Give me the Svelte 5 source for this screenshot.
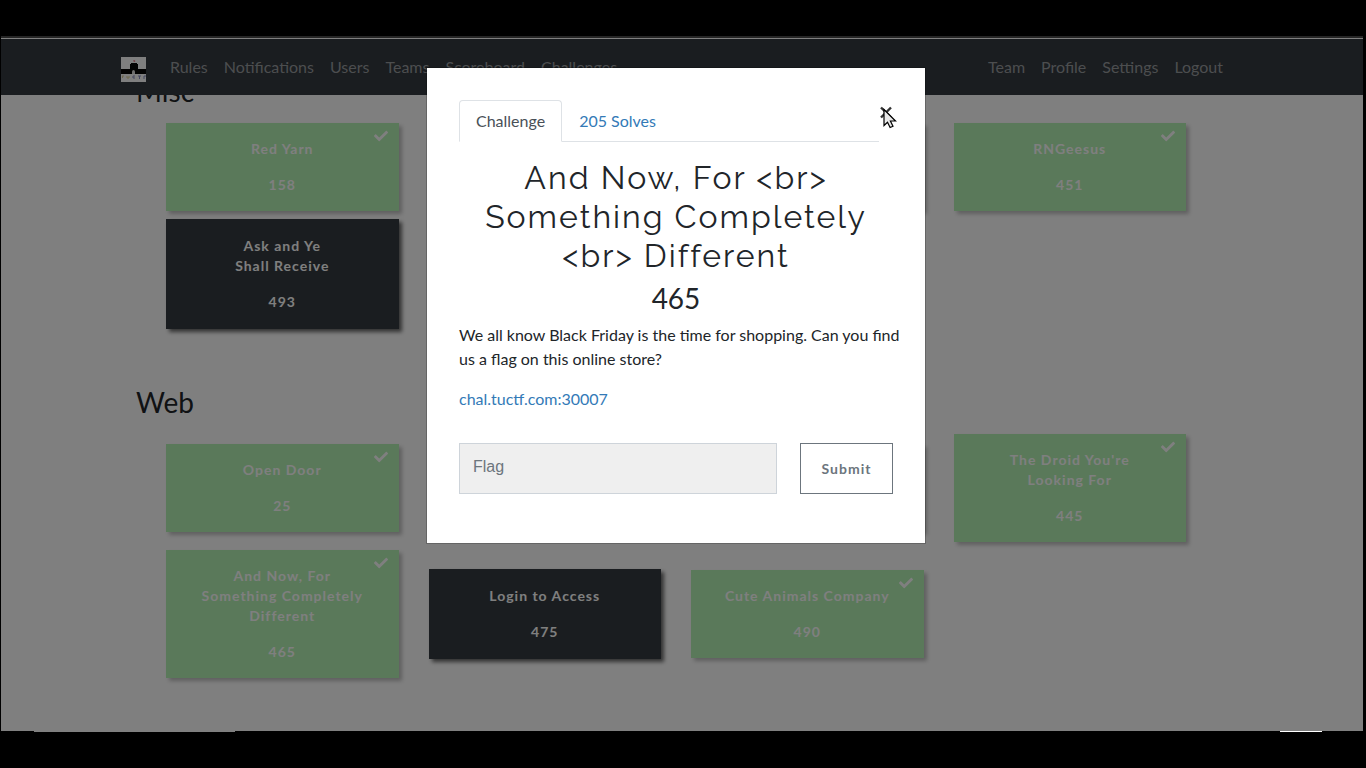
<script>
  const leftLinks = ['Rules', 'Notifications', 'Users', 'Teams', 'Scoreboard', 'Challenges'];
  const rightLinks = ['Team', 'Profile', 'Settings', 'Logout'];
  const sections = [
    {
      name: 'Misc',
      cards: [
        { lines: ['Red Yarn'], points: 158, solved: true },
        { covered: true },
        { covered: true },
        { lines: ['RNGeesus'], points: 451, solved: true },
        { lines: ['Ask and Ye', 'Shall Receive'], points: 493 }
      ]
    },
    {
      name: 'Web',
      cards: [
        { lines: ['Open Door'], points: 25, solved: true },
        { covered: true },
        { covered: true },
        { lines: ["The Droid You're", 'Looking For'], points: 445, solved: true },
        { lines: ['And Now, For', 'Something Completely', 'Different'], points: 465, solved: true },
        { lines: ['Login to Access'], points: 475 },
        { lines: ['Cute Animals Company'], points: 490, solved: true }
      ]
    }
  ];
  let flag = $state('');
</script>

<div class="window">
  <div class="chrome"></div>
  <div class="page">
    <nav>
      <div class="container bar">
        <a class="brand" href="#home" aria-label="Home">
          <svg width="25" height="25" viewBox="0 0 25 25">
            <rect width="25" height="25" fill="#fff" />
            <path d="M0 12h9V7h1V6h6v1h1v5h8v5H0z" fill="#060606" />
            <path d="M11 17v-2q0-2 1.500-2t1.500 2v2z" fill="#ddd" />
            <path d="M12 4l1-1 1.500 1-1 1z" fill="#e06c78" />
            <path d="M1 19h2M1.500 19v2M6 19v2h2v-2" stroke="#dccf98" fill="none" />
            <path d="M14 19h-2v2h2M17 19h3M18.500 19v3M25 19h-2v3" stroke="#8a8fc0" fill="none" />
          </svg>
        </a>
        <div class="links">
          {#each leftLinks as l}<a href="#{l}">{l}</a>{/each}
        </div>
        <div class="links end">
          {#each rightLinks as l}<a href="#{l}">{l}</a>{/each}
        </div>
      </div>
    </nav>
    <main class="container">
      {#each sections as s}
        <section>
          <h3>{s.name}</h3>
          <div class="cards">
            {#each s.cards as c}
              {#if c.covered}
                <div class="card solved"></div>
              {:else}
                <button class="card" class:solved={c.solved}>
                  {#if c.solved}
                    <svg class="check" width="14" height="14" viewBox="0 0 512 512" fill="currentColor">
                      <path d="M173.898 439.404l-166.400-166.400c-9.997-9.997-9.997-26.206 0-36.204l36.203-36.204c9.997-9.998 26.207-9.998 36.204 0L192 312.690 432.095 72.596c9.997-9.997 26.207-9.997 36.204 0l36.203 36.204c9.997 9.997 9.997 26.206 0 36.204l-294.400 294.401c-9.998 9.997-26.207 9.997-36.204-.001z" />
                    </svg>
                  {/if}
                  <span class="name">{#each c.lines as line}<span>{line}</span>{/each}</span>
                  <span>{c.points}</span>
                </button>
              {/if}
            {/each}
          </div>
        </section>
      {/each}
    </main>
  </div>
  <div class="backdrop"></div>
  <div class="modal" role="dialog" aria-labelledby="title">
    <div class="head">
      <div class="tabs" role="tablist">
        <button role="tab" aria-selected="true" class="tab active">Challenge</button>
        <button role="tab" aria-selected="false" class="tab">205 Solves</button>
      </div>
      <button class="close" aria-label="Close">
        <svg width="14" height="24" viewBox="0 0 14 24">
          <path d="M2 7.500l10 10M12 7.500l-10 10" stroke="#333" stroke-width="2.400" />
        </svg>
        <svg class="pointer" width="14" height="21" viewBox="0 0 14 21">
          <path d="M1 1.500V17.500l3.500-3.300 2.600 5.300 2.900-1.300-2.600-5.200H12.500z" fill="#e9e9e9" stroke="#000" stroke-width="1.200" />
        </svg>
      </button>
    </div>
    <h2 id="title">And Now, For &lt;br&gt;<br />Something Completely<br />&lt;br&gt; Different</h2>
    <h3 class="points">465</h3>
    <p>We all know Black Friday is the time for shopping. Can you find<br />us a flag on this online store?</p>
    <p><a href="#chal">chal.tuctf.com:30007</a></p>
    <form onsubmit={(e) => e.preventDefault()}>
      <input type="text" aria-label="Flag" placeholder="Flag" bind:value={flag} />
      <button class="submit">Submit</button>
    </form>
  </div>
</div>
<div class="dock"><div class="task"></div><div class="tray"></div></div>

<style>
  :global(body) {
    margin: 0;
    background: #000;
    font-family: Lato, sans-serif;
    font-size: 16px;
    line-height: 24px;
    color: #212529;
  }
  * { box-sizing: border-box; }
  button { font-family: inherit; cursor: pointer; }
  a { text-decoration: none; }
  .window {
    position: relative;
    margin: 36px 3px 0 1px;
  }
  .chrome {
    height: 3px;
    background: #4c4c4c;
    border-bottom: 1px solid #fff;
  }
  .page { background: #fff; }
  .container {
    max-width: 1110px;
    margin: 0 auto;
  }
  nav {
    position: relative;
    z-index: 1;
    background: #343a40;
    padding: 8px 12px 8px 0;
  }
  .bar {
    display: flex;
    align-items: center;
    height: 40px;
  }
  .brand { display: flex; margin: 4px 16px 0 0; }
  .links { display: flex; }
  .links.end { margin-left: auto; }
  .links a { padding: 8px; color: #999c9f; }
  main.container {
    max-width: 1122px;
    margin-top: -21px;
    padding: 0 27px 53px 15px;
  }
  section + section { margin-top: 56px; }
  h3 {
    margin: 0;
    font-size: 28px;
    line-height: 34px;
    font-weight: 400;
  }
  .cards {
    display: grid;
    grid-template-columns: repeat(4, 1fr);
    gap: 8px 30px;
    align-items: center;
    padding: 15px 30px 0;
  }
  .card {
    position: relative;
    display: flex;
    flex-direction: column;
    gap: 16px;
    min-height: 88px;
    padding: 16px 0;
    border: 1px solid #343a40;
    background: #343a40;
    color: #fff;
    font-size: 14px;
    line-height: 20px;
    font-weight: 700;
    letter-spacing: 1px;
    text-align: center;
    align-items: center;
    box-shadow: 3px 3px 4px rgba(0, 0, 0, 0.6);
  }
  .card.solved {
    border: 0;
    background: #b4f2b4;
    box-shadow: 3px 3px 4px rgba(0, 0, 0, 0.25);
  }
  .name { display: flex; flex-direction: column; }
  .check {
    position: absolute;
    top: 6px;
    right: 11px;
  }
  .backdrop {
    position: absolute;
    inset: 0;
    z-index: 2;
    background: rgba(0, 0, 0, 0.5);
  }
  .modal {
    position: absolute;
    z-index: 3;
    top: 31px;
    left: 0;
    right: 12px;
    width: 500px;
    margin: 0 auto;
    padding: 32px 32px 49px;
    border: 1px solid rgba(0, 0, 0, 0.2);
    background: #fff;
    background-clip: padding-box;
  }
  .head { display: flex; }
  .tabs {
    display: flex;
    flex: 1;
    border-bottom: 1px solid #dee2e6;
  }
  .tab {
    margin-bottom: -1px;
    padding: 8px 16px;
    border: 1px solid transparent;
    background: none;
    font-size: 16px;
    line-height: 24px;
    color: #337ab7;
  }
  .tab.active {
    border-color: #dee2e6 #dee2e6 #fff;
    border-radius: 4px 4px 0 0;
    background: #fff;
    color: #495057;
  }
  .close {
    position: relative;
    display: flex;
    width: 14px;
    padding: 0;
    border: 0;
    background: none;
  }
  .pointer {
    position: absolute;
    top: 8px;
    left: 4px;
  }
  h2 {
    margin: 16px 0 6px;
    font-family: Raleway, "Open Sans", sans-serif;
    font-size: 32px;
    line-height: 39px;
    font-weight: 400;
    letter-spacing: 2px;
    text-align: center;
    white-space: nowrap;
  }
  .points { margin-bottom: 8px; text-align: center; }
  p { margin: 0 0 16px; white-space: nowrap; }
  p a { color: #337ab7; }
  form { display: flex; gap: 23px; margin-top: 32px; }
  input {
    flex: 1;
    min-width: 0;
    height: 51px;
    padding: 0 13px 4px;
    border: 1px solid #ced4da;
    background: #efefef;
    font-family: "Liberation Sans", Arial, sans-serif;
    font-size: 16px;
  }
  input::placeholder { color: #6c757d; opacity: 1; }
  .submit {
    width: 93px;
    padding: 0;
    border: 1px solid #6c757d;
    background: #fff;
    color: #6c757d;
    font-size: 14px;
    font-weight: 700;
    letter-spacing: 1px;
  }
  .dock {
    display: flex;
    justify-content: space-between;
    padding: 0 44px 0 34px;
  }
  .task { width: 201px; height: 1px; background: #808080; }
  .tray { width: 42px; height: 1px; background: #fff; }
</style>
